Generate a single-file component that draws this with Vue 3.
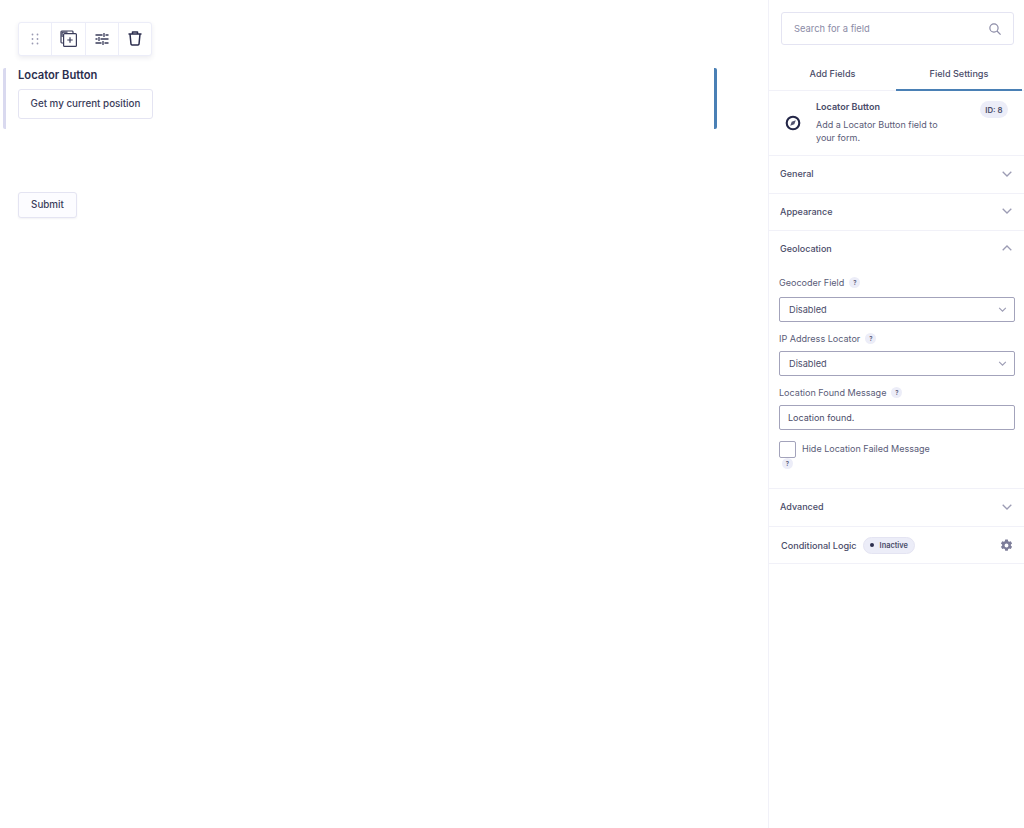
<script setup>
</script>

<template>
  <div class="page">
    <main class="canvas">
      <div class="toolbar">
        <button class="tool">
          <svg width="8" height="12" viewBox="0 0 8 12" fill="#9a9ab2"><circle cx="1.500" cy="1.500" r="0.900"/><circle cx="6.500" cy="1.500" r="0.900"/><circle cx="1.500" cy="6" r="0.900"/><circle cx="6.500" cy="6" r="0.900"/><circle cx="1.500" cy="10.500" r="0.900"/><circle cx="6.500" cy="10.500" r="0.900"/></svg>
        </button>
        <button class="tool">
          <svg class="copy" width="17" height="17" viewBox="0 0 17 17" fill="none" stroke="#3a3c5a" stroke-width="1.200"><path d="M3.500 13H1.800a.9.900 0 0 1-.8-.9V1.800a.9.900 0 0 1 .8-.8h10.300a.9.900 0 0 1 .9.800V3.500"/><path d="M1.500 1.500h6v1.200H2.700V7H1.500z" fill="#3a3c5a" stroke="none"/><rect x="3.600" y="3.600" width="12.800" height="12.800" rx="1"/><path d="M10 7.300v5.400M7.300 10h5.400"/></svg>
        </button>
        <button class="tool">
          <svg width="14" height="14" viewBox="0 0 14 14" fill="none" stroke="#3a3c5a" stroke-width="1.300"><path d="M.5 3h7M10.500 3h3M.5 7h2M5.500 7h8M.5 11h6M9.500 11h4"/><path d="M9 1v4M4 5v4M8 9v4"/></svg>
        </button>
        <button class="tool">
          <svg class="trash" width="14" height="15" viewBox="0 0 14 15" fill="none" stroke="#2c2e4e" stroke-width="1.500" stroke-linejoin="round"><path d="M.5 3h13M4.500 3V1h5v2M2 3l1 10.200a1 1 0 0 0 1 .8h6a1 1 0 0 0 1-.8L12 3"/></svg>
        </button>
      </div>

      <section class="field">
        <h2 class="field-label">Locator Button</h2>
        <button class="outline-btn locate">Get my current position</button>
      </section>

      <button class="outline-btn submit">Submit</button>
    </main>

    <aside class="sidebar">
      <div class="search-wrap">
        <div class="search">
          <span>Search for a field</span>
          <svg width="12" height="12" viewBox="0 0 14 14" fill="none" stroke="#8b8ba6" stroke-width="1.400"><circle cx="5.800" cy="5.800" r="4.800"/><path d="M9.300 9.300l4.200 4.200"/></svg>
        </div>
      </div>

      <div class="tabs">
        <div class="tab">Add Fields</div>
        <div class="tab active">Field Settings</div>
      </div>

      <div class="info">
        <svg class="compass" width="16" height="16" viewBox="0 0 16 16" fill="none"><circle cx="8" cy="8" r="6.300" stroke="#242748" stroke-width="2.100"/><path d="M10.800 5.200L9.300 9.300 5.200 10.800l1.500-4.100z" fill="#50526e"/></svg>
        <div class="info-text">
          <div class="info-title">Locator Button</div>
          <p>Add a Locator Button field to your form.</p>
        </div>
        <span class="id-badge">ID: 8</span>
      </div>

      <div class="section-head"><span>General</span><svg class="chev" width="10" height="6" viewBox="0 0 10 6" fill="none"><path d="M.7 .8L5 5l4.300-4.200"/></svg></div>
      <div class="section-head"><span>Appearance</span><svg class="chev" width="10" height="6" viewBox="0 0 10 6" fill="none"><path d="M.7 .8L5 5l4.300-4.200"/></svg></div>

      <div class="section open">
        <div class="section-head bare"><span>Geolocation</span><svg class="chev" width="10" height="6" viewBox="0 0 10 6" fill="none"><path d="M.7 5.200L5 1l4.300 4.200"/></svg></div>
        <div class="form">
          <label class="lbl">Geocoder Field <i class="help">?</i></label>
          <div class="control select first">Disabled<svg class="chev" width="9" height="5" viewBox="0 0 10 6" fill="none"><path d="M1 1l4 4 4-4"/></svg></div>
          <label class="lbl second">IP Address Locator <i class="help">?</i></label>
          <div class="control select">Disabled<svg class="chev" width="9" height="5" viewBox="0 0 10 6" fill="none"><path d="M1 1l4 4 4-4"/></svg></div>
          <label class="lbl second">Location Found Message <i class="help">?</i></label>
          <div class="control text">Location found.</div>
          <div class="check-row">
            <span class="checkbox"></span>
            <span class="check-label">Hide Location Failed Message</span>
          </div>
          <i class="help under">?</i>
        </div>
      </div>

      <div class="section-head"><span>Advanced</span><svg class="chev" width="10" height="6" viewBox="0 0 10 6" fill="none"><path d="M.7 .8L5 5l4.300-4.200"/></svg></div>

      <div class="logic">
        <span class="logic-title">Conditional Logic</span>
        <span class="status"><b></b>Inactive</span>
        <svg class="gear" width="13" height="13" viewBox="0 0 14 14"><path fill="#7d7d99" fill-rule="evenodd" d="M5.600 .6h2.800l.4 1.700 1.100 .6 1.700-.5 1.400 2.400-1.300 1.200v1.200l1.300 1.200-1.400 2.400-1.700-.5-1.100 .6-.4 1.700H5.600l-.4-1.700-1.100-.6-1.700 .5L1 8.400l1.300-1.200V6L1 4.800l1.400-2.400 1.700 .5 1.100-.6zM7 4.900a2.100 2.100 0 1 0 0 4.200 2.100 2.100 0 0 0 0-4.200z"/></svg>
      </div>
    </aside>
  </div>
</template>

<style>
html, body { margin: 0; background: #fff; }
</style>

<style scoped>
.page {
  display: flex;
  width: 1024px;
  height: 828px;
  overflow: hidden;
  font-family: Inter, "Liberation Sans", sans-serif;
  color: #2c2e4e;
  background: #fff;
}
.canvas {
  width: 768px;
  flex: none;
  box-sizing: border-box;
  padding: 22px 0 0 18px;
}
.toolbar {
  display: flex;
  width: 134px;
  height: 34px;
  box-sizing: border-box;
  border: 1px solid #ecedf8;
  border-radius: 3px;
  background: #fff;
  box-shadow: 0 2px 5px rgba(40, 40, 90, 0.09);
}
.tool {
  flex: 1;
  padding: 0;
  display: flex;
  align-items: center;
  justify-content: center;
  background: none;
  border: 0;
  border-left: 1px solid #ecedf8;
}
.tool:first-child { border-left: 0; }
.copy { margin-top: -2px; }
.trash { margin-top: -2px; }
.field {
  margin: 12px 0 0 -15px;
  width: 714px;
  height: 61px;
  box-sizing: border-box;
  padding-left: 12px;
  border-left: 3px solid #d9d9ef;
  border-right: 3px solid #4a80b5;
  border-radius: 2px;
}
.field-label {
  margin: 0;
  font-size: 11.200px;
  font-weight: 600;
  line-height: 14px;
  color: #2c2e4e;
}
.outline-btn {
  display: block;
  box-sizing: border-box;
  padding: 0 0 1px;
  font: 500 9.800px/1 Inter, "Liberation Sans", sans-serif;
  color: #3a3c5a;
  background: #fff;
  border: 1px solid #e4e4f2;
  border-radius: 3px;
}
.locate {
  margin-top: 7px;
  width: 135px;
  height: 30px;
}
.submit {
  margin-top: 63px;
  width: 59px;
  height: 26px;
  background: #fcfcff;
  box-shadow: 0 1px 2px rgba(40, 40, 90, 0.06);
}
.sidebar {
  width: 256px;
  flex: none;
  box-sizing: border-box;
  border-left: 1px solid #f1f1f8;
  font-size: 9px;
}
.search-wrap { padding: 12px 10px 0 12px; }
.search {
  display: flex;
  align-items: center;
  justify-content: space-between;
  box-sizing: border-box;
  height: 33px;
  padding: 0 12px;
  border: 1px solid #e4e4f2;
  border-radius: 3px;
  color: #8b8ba6;
  font-size: 9.400px;
}
.tabs {
  display: flex;
  margin-top: 11px;
  height: 35px;
  border-bottom: 1px solid #f1f1f8;
  box-sizing: border-box;
}
.tab {
  flex: none;
  width: 127px;
  padding-top: 12px;
  box-sizing: border-box;
  text-align: center;
  font-size: 9.100px;
  font-weight: 500;
  color: #4a4c69;
}
.tab.active {
  height: 35px;
  width: 126px;
  border-bottom: 2px solid #4a80b5;
}
.info {
  display: flex;
  align-items: flex-start;
  height: 65px;
  box-sizing: border-box;
  padding: 10px 15px 0 16px;
  border-bottom: 1px solid #f1f1f8;
  position: relative;
}
.compass { margin-top: 14px; flex: none; }
.info-text { margin-left: 15px; width: 140px; }
.info-title { font-size: 9px; font-weight: 600; line-height: 12px; color: #4a4c69; }
.info p { margin: 4.500px 0 0; font-size: 9px; line-height: 13px; color: #5a5c78; }
.id-badge {
  position: absolute;
  top: 10px;
  right: 16px;
  height: 17px;
  padding: 0 5.500px;
  display: flex;
  align-items: center;
  border-radius: 9px;
  background: #ecedf8;
  font-size: 7.800px;
  font-weight: 600;
  color: #4a4c69;
}
.section-head {
  display: flex;
  align-items: center;
  justify-content: space-between;
  box-sizing: border-box;
  height: 37.500px;
  padding: 0 12px 1px 11px;
  border-bottom: 1px solid #f1f1f8;
  font-size: 9px;
  font-weight: 500;
  color: #4a4c69;
}
.section-head.bare { border-bottom: 0; padding-bottom: 3px; }
.chev { stroke: #9c9cb4; stroke-width: 1.300; }
.section.open {
  height: 258px;
  box-sizing: border-box;
  border-bottom: 1px solid #f1f1f8;
}
.form { padding: 7px 9px 0 10px; }
.lbl {
  display: flex;
  align-items: center;
  gap: 5px;
  height: 14px;
  font-size: 9.050px;
  color: #5a5c78;
}
.lbl.second { margin-top: 10px; }
.help {
  display: inline-flex;
  align-items: center;
  justify-content: center;
  width: 11px;
  height: 11px;
  border-radius: 50%;
  background: #ecedf8;
  font: 600 6px Inter, sans-serif;
  color: #5a5c78;
}
.control {
  display: flex;
  align-items: center;
  justify-content: space-between;
  box-sizing: border-box;
  height: 25px;
  margin-top: 5px;
  padding: 0 7px 0 9px;
  border: 1px solid #a3a3bb;
  border-radius: 2px;
  font-size: 9.200px;
  color: #4a4c69;
}
.control.first { margin-top: 7px; }
.control.text { padding-left: 8px; font-size: 9px; }
.check-row {
  display: flex;
  align-items: flex-start;
  margin-top: 11px;
}
.checkbox {
  width: 17px;
  height: 17px;
  box-sizing: border-box;
  border: 1px solid #a3a3bb;
  border-radius: 2px;
}
.check-label { margin-left: 6px; line-height: 16px; font-size: 9px; color: #5a5c78; }
.help.under { display: flex; margin-left: 3px; }
.logic {
  display: flex;
  align-items: center;
  box-sizing: border-box;
  height: 37px;
  padding: 1px 11px 0 12px;
  border-bottom: 1px solid #f1f1f8;
}
.logic-title { font-size: 9.100px; font-weight: 500; color: #4a4c69; }
.status {
  display: flex;
  align-items: center;
  height: 17px;
  margin-left: 6px;
  padding: 0 6px;
  border-radius: 9px;
  background: #ecedf8;
  border: 1px solid #e4e4f2;
  box-sizing: border-box;
  font-size: 7.400px;
  font-weight: 600;
  color: #4a4c69;
}
.status b {
  width: 4px;
  height: 4px;
  border-radius: 50%;
  background: #2c2e4e;
  margin-right: 6px;
}
.gear { margin-left: auto; }
</style>
